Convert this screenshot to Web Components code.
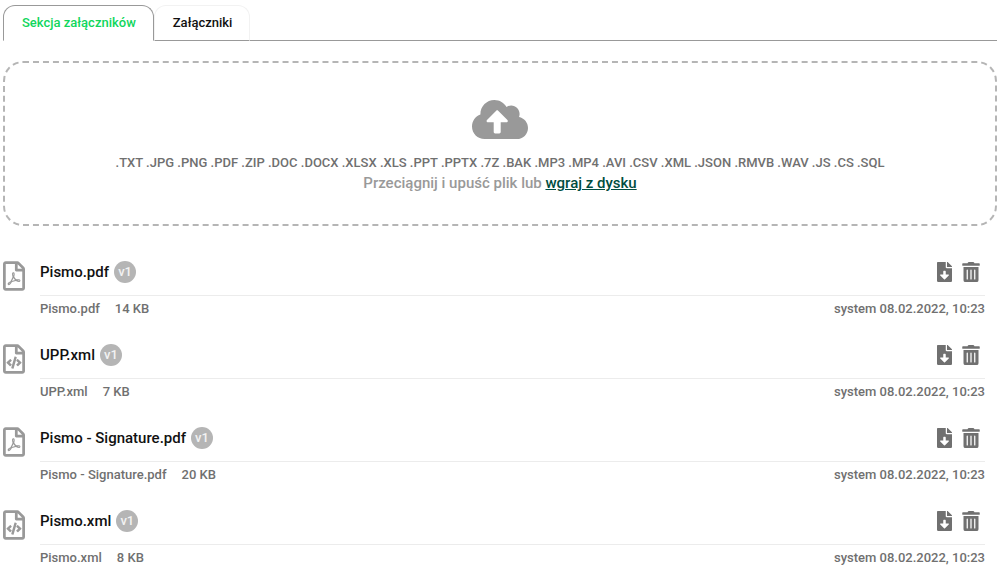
<!DOCTYPE html>
<html lang="pl">
<head>
<meta charset="utf-8">
<title>Załączniki</title>
<style>
body { margin: 0; background: #fff; color: #111; font-family: Roboto, sans-serif; font-size: 14px; }
</style>
</head>
<body>
<attachments-page></attachments-page>
<script>
const ICONS = {
  cloud: ['0 0 640 512', 'M537.6 226.6c4.1-10.7 6.4-22.4 6.4-34.6 0-53-43-96-96-96-19.7 0-38.1 6-53.3 16.2C367 64.2 315.3 32 256 32c-88.4 0-160 71.6-160 160 0 2.7.1 5.4.2 8.1C40.2 219.8 0 273.2 0 336c0 79.5 64.5 144 144 144h368c70.7 0 128-57.3 128-128 0-61.9-44-113.6-102.4-125.4zM393.4 288H328v112c0 8.8-7.2 16-16 16h-48c-8.8 0-16-7.2-16-16V288h-65.4c-14.3 0-21.4-17.2-11.3-27.4l105.4-105.4c6.2-6.2 16.4-6.2 22.6 0l105.4 105.4c10.1 10.1 2.9 27.4-11.3 27.4z'],
  pdf: ['0 0 384 512', 'M369.9 97.9L286 14C277 5 264.8-.1 252.1-.1H48C21.5 0 0 21.5 0 48v416c0 26.5 21.5 48 48 48h288c26.5 0 48-21.5 48-48V131.9c0-12.7-5.1-25-14.1-34zM332.1 128H256V51.9l76.1 76.1zM48 464V48h160v104c0 13.3 10.7 24 24 24h104v288H48zm250.2-143.7c-12.2-12-47-8.7-64.4-6.5-17.2-10.5-28.7-25-36.8-46.3 3.9-16.1 10.1-40.6 5.4-56-4.2-26.2-37.8-23.6-42.6-5.9-4.4 16.1-.4 38.5 7 67.1-10 23.9-24.9 56-35.4 74.4-20 10.3-47 26.2-51 46.2-3.3 15.8 26 55.2 76.1-31.2 22.4-7.4 46.8-16.5 68.4-20.1 18.9 10.2 41 17 55.8 17 25.5 0 28-28.2 17.5-38.7zm-198.1 77.8c5.1-13.7 24.5-29.5 30.4-35-19 30.3-30.4 35.7-30.4 35zm81.6-190.6c7.4 0 6.7 32.1 1.8 40.8-4.4-13.9-4.3-40.8-1.8-40.8zm-24.4 136.6c9.7-16.9 18-37 24.7-54.7 8.3 15.1 18.9 27.2 30.1 35.5-20.8 4.3-38.9 13.1-54.8 19.2zm131.6-5s-5 6-37.3-7.8c35.1-2.6 40.9 5.4 37.3 7.8z'],
  xml: ['0 0 384 512', 'M149.9 349.1l-.2-.2-32.8-28.9 32.8-28.9c3.6-3.2 4-8.8.8-12.4l-.2-.2-17.4-18.6c-3.4-3.6-9-3.7-12.4-.4l-57.7 54.1c-3.7 3.5-3.7 9.4 0 12.8l57.7 54.1c1.6 1.5 3.8 2.4 6 2.4 2.4 0 4.8-1 6.4-2.8l17.4-18.6c3.3-3.5 3.1-9.1-.4-12.4zm220-251.2L286 14C277 5 264.8 0 252.1 0H48C21.5 0 0 21.5 0 48v416c0 26.5 21.5 48 48 48h288c26.5 0 48-21.5 48-48V132c0-12.7-5.1-25.1-14.1-34.1zM256 51.9l76.1 76.1H256V51.9zM336 464H48V48h160v104c0 13.3 10.7 24 24 24h104v288zM209.6 214c-4.7-1.4-9.5 1.3-10.9 6L144 408.1c-1.4 4.7 1.3 9.6 6 10.9l24.4 7.1c4.7 1.4 9.6-1.4 10.9-6L240 231.9c1.4-4.7-1.3-9.6-6-10.9l-24.4-7zm24.5 76.9l.2.2 32.8 28.9-32.8 28.9c-3.6 3.2-4 8.8-.8 12.4l.2.2 17.4 18.6c3.3 3.5 8.9 3.7 12.4.4l57.7-54.1c3.7-3.5 3.7-9.4 0-12.8l-57.7-54.1c-3.5-3.3-9.1-3.2-12.4.4l-17.4 18.6c-3.3 3.5-3.1 9.1.4 12.4z'],
  download: ['0 0 384 512', 'M224 136V0H24C10.7 0 0 10.7 0 24v464c0 13.3 10.7 24 24 24h336c13.3 0 24-10.7 24-24V160H248c-13.2 0-24-10.8-24-24zm76.45 211.36l-96.42 95.7c-6.65 6.61-17.39 6.61-24.04 0l-96.42-95.7C73.42 337.29 80.54 320 94.82 320H160v-80c0-8.84 7.16-16 16-16h32c8.84 0 16 7.16 16 16v80h65.18c14.28 0 21.4 17.29 11.27 27.36zM377 105L279.1 7c-4.5-4.5-10.6-7-17-7H256v128h128v-6.1c0-6.3-2.5-12.4-7-16.9z'],
  trash: ['0 0 448 512', 'M32 464a48 48 0 0 0 48 48h288a48 48 0 0 0 48-48V128H32zm272-256a16 16 0 0 1 32 0v224a16 16 0 0 1-32 0zm-96 0a16 16 0 0 1 32 0v224a16 16 0 0 1-32 0zm-96 0a16 16 0 0 1 32 0v224a16 16 0 0 1-32 0zM432 32H312l-9.4-18.7A24 24 0 0 0 281.1 0H166.8a23.72 23.72 0 0 0-21.4 13.3L136 32H16A16 16 0 0 0 0 48v32a16 16 0 0 0 16 16h416a16 16 0 0 0 16-16V48a16 16 0 0 0-16-16z']
};

function define(name, render) {
  customElements.define(name, class extends HTMLElement {
    connectedCallback() {
      if (!this.shadowRoot) this.attachShadow({ mode: 'open' }).innerHTML = render(this);
    }
  });
}

define('ui-icon', el => {
  const [box, path] = ICONS[el.getAttribute('name')];
  return `<style>:host { display: block; } svg { display: block; width: 100%; height: 100%; fill: currentColor; }</style>
    <svg viewBox="${box}" aria-hidden="true"><path d="${path}"/></svg>`;
});

define('tab-item', el => `
  <style>
    :host { display: block; }
    button { display: block; height: 36px; padding: 0 17px 0 18px; background: #fff; color: #111; cursor: pointer;
      font: 500 13px/34px Roboto, sans-serif; border: 1px solid #f2f2f2; border-bottom: 1px solid #999; border-radius: 12px 12px 0 0; }
    :host([selected]) button { color: #10d65c; border-color: #999; border-bottom-color: #fff; }
  </style>
  <button type="button" role="tab" aria-selected="${el.hasAttribute('selected')}"><slot></slot></button>`);

define('tab-strip', () => `
  <style>
    :host { display: flex; }
    .line { flex: 1; border-bottom: 1px solid #999; }
  </style>
  <slot></slot><div class="line"></div>`);

define('drop-zone', () => `
  <style>
    :host { display: flex; flex-direction: column; align-items: center; box-sizing: border-box; margin-top: 20px;
      padding: 34px 20px 31px; border: 2px dashed #b5b5b5; border-radius: 20px; font-weight: 500; text-align: center; }
    ui-icon { width: 56px; height: 45px; color: #999; }
    p { margin: 0; }
    .types { margin-top: 11px; color: #707070; font-size: 13px; line-height: 20px; }
    .hint { color: #999; font-size: 15px; line-height: 20px; }
    a { color: #004d40; }
  </style>
  <ui-icon name="cloud"></ui-icon>
  <p class="types"><slot></slot></p>
  <p class="hint">Przeciągnij i upuść plik lub <a href="#">wgraj z dysku</a></p>`);

define('file-row', el => `
  <style>
    :host { display: flex; gap: 15px; height: 83px; color: #707070; }
    .type { width: 22px; height: 30px; margin-top: 5px; color: #999; }
    .body { flex: 1; }
    .head { display: flex; align-items: center; height: 40px; border-bottom: 1px solid #ececec; box-sizing: border-box; padding-bottom: 7px; }
    .name { color: #111; font-size: 15px; font-weight: 500; line-height: 22px; }
    .badge { width: 22px; height: 22px; margin-left: 5px; border-radius: 50%; background: #b5b5b5; color: #f2f2f2;
      font-size: 13px; font-weight: 500; line-height: 22px; text-align: center; }
    .actions { display: flex; gap: 10px; margin-left: auto; padding-right: 5px; }
    button { display: block; padding: 0; border: 0; background: none; color: #707070; cursor: pointer; }
    .get { width: 15px; height: 20px; }
    .del { width: 18px; height: 20px; }
    .meta { display: flex; gap: 15px; padding-top: 3px; font-size: 13px; font-weight: 500; line-height: 20px; }
    .date { margin-left: auto; }
  </style>
  <ui-icon class="type" name="${el.getAttribute('type')}"></ui-icon>
  <div class="body">
    <div class="head">
      <span class="name">${el.getAttribute('name')}</span><span class="badge">v1</span>
      <div class="actions">
        <button type="button" aria-label="Pobierz"><ui-icon class="get" name="download"></ui-icon></button>
        <button type="button" aria-label="Usuń"><ui-icon class="del" name="trash"></ui-icon></button>
      </div>
    </div>
    <div class="meta"><span>${el.getAttribute('name')}</span><span>${el.getAttribute('size')}</span><span class="date">system 08.02.2022, 10:23</span></div>
  </div>`);

define('attachments-page', () => `
  <style>
    :host { display: block; padding: 5px 8px 0 3px; }
    .files { margin-top: 30px; padding-right: 12px; }
  </style>
  <tab-strip role="tablist"><tab-item selected>Sekcja załączników</tab-item><tab-item>Załączniki</tab-item></tab-strip>
  <drop-zone>.TXT .JPG .PNG .PDF .ZIP .DOC .DOCX .XLSX .XLS .PPT .PPTX .7Z .BAK .MP3 .MP4 .AVI .CSV .XML .JSON .RMVB .WAV .JS .CS .SQL</drop-zone>
  <div class="files">
    <file-row type="pdf" name="Pismo.pdf" size="14 KB"></file-row>
    <file-row type="xml" name="UPP.xml" size="7 KB"></file-row>
    <file-row type="pdf" name="Pismo - Signature.pdf" size="20 KB"></file-row>
    <file-row type="xml" name="Pismo.xml" size="8 KB"></file-row>
  </div>`);
</script>
</body>
</html>
